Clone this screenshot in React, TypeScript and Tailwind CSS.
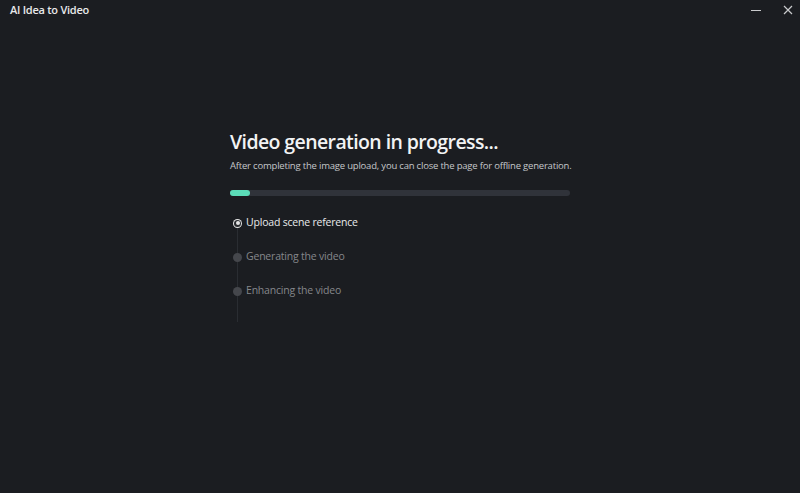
import React from "react";

const steps = [
  { label: "Upload scene reference", active: true },
  { label: "Generating the video", active: false },
  { label: "Enhancing the video", active: false },
];

export default function App() {
  return (
    <div
      className="w-[800px] h-[493px] bg-[#1b1d21] text-white flex flex-col overflow-hidden"
      style={{ fontFamily: '"Open Sans", "Noto Sans", sans-serif' }}
    >
      <div className="h-[20px] flex items-center justify-between pl-[10px] pr-[7px]">
        <span className="text-[11px] font-semibold text-[#e8e9ea] tracking-[-0.25px]">AI Idea to Video</span>
        <div className="flex items-center gap-[22px] text-[#c9cacc]">
          <svg width="10" height="10" viewBox="0 0 10 10">
            <path d="M0 5.5h10" stroke="currentColor" strokeWidth="1" />
          </svg>
          <svg width="10" height="10" viewBox="0 0 10 10">
            <path d="M1 1l8 8M9 1l-8 8" stroke="currentColor" strokeWidth="1.2" />
          </svg>
        </div>
      </div>

      <div className="pl-[230px] pt-[109px] w-[570px] box-content">
        <h1 className="text-[19.5px] leading-[26px] font-semibold text-[#f2f3f4] tracking-[-0.6px]">
          Video generation in progress...
        </h1>
        <p className="mt-[4px] text-[9.5px] leading-[14px] text-[#c5c7ca] tracking-[-0.2px]">
          After completing the image upload, you can close the page for offline generation.
        </p>
        <div className="mt-[17px] w-[340px] h-[6px] rounded-full bg-[#30333a]">
          <div className="h-full w-[20px] rounded-full bg-[#5bdcb8]" />
        </div>

        <div className="relative mt-[10px]">
          <div className="absolute left-[7px] top-[20px] w-px h-[96px] bg-[#2a2d32]" />
          {steps.map((s) => (
            <div key={s.label} className="relative flex items-center h-[34px]">
              <div className="w-[15px] flex justify-center">
                {s.active ? (
                  <span className="w-[9px] h-[9px] rounded-full bg-[#e6e6e6] flex items-center justify-center">
                    <span className="w-[7px] h-[7px] rounded-full bg-[#2a2c30] flex items-center justify-center">
                      <span className="w-[4px] h-[4px] rounded-full bg-[#e6e6e6]" />
                    </span>
                  </span>
                ) : (
                  <span className="w-[9px] h-[9px] rounded-full bg-[#45474c]" />
                )}
              </div>
              <span
                className={
                  s.active
                    ? "ml-[1px] text-[10.5px] text-[#e9eaeb] tracking-[-0.2px]"
                    : "ml-[1px] text-[10.5px] text-[#85878b] tracking-[-0.2px]"
                }
              >
                {s.label}
              </span>
            </div>
          ))}
        </div>
      </div>
    </div>
  );
}
